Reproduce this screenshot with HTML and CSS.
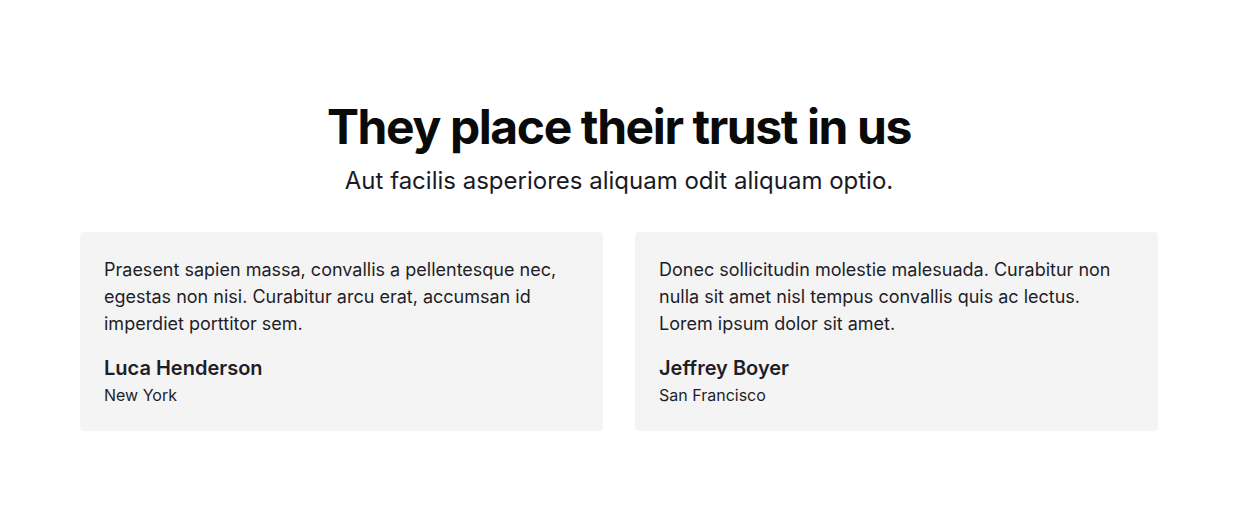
FILE: index.html
```html
<!DOCTYPE html>
<html lang="en">
<head>
<meta charset="utf-8">
<title>Testimonials</title>
<link rel="stylesheet" href="styles.css">
</head>
<body>
<section class="testimonials">
  <header class="intro">
    <h1 class="title">They place their trust in us</h1>
    <p class="subtitle">Aut facilis asperiores aliquam odit aliquam optio.</p>
  </header>
  <div class="cards">
    <article class="card">
      <p class="quote">Praesent sapien massa, convallis a pellentesque nec, egestas non nisi. Curabitur arcu erat, accumsan id imperdiet porttitor sem.</p>
      <div class="author">Luca Henderson</div>
      <div class="place">New York</div>
    </article>
    <article class="card">
      <p class="quote">Donec sollicitudin molestie malesuada. Curabitur non nulla sit amet nisl tempus convallis quis ac lectus. Lorem ipsum dolor sit amet.</p>
      <div class="author">Jeffrey Boyer</div>
      <div class="place">San Francisco</div>
    </article>
  </div>
</section>
</body>
</html>
```
FILE: styles.css
```css
* { box-sizing: border-box; }
body {
  margin: 0;
  background: #ffffff;
  font-family: Inter, "Noto Sans", sans-serif;
  color: #18181b;
}
.testimonials {
  padding: 96px 80px 0;
}
.intro {
  text-align: center;
}
.title {
  margin: 0;
  font-size: 48px;
  line-height: 62px;
  font-weight: 700;
  letter-spacing: -1.4px;
  color: #0a0a0a;
}
.subtitle {
  margin: 7px 0 0;
  font-size: 24px;
  line-height: 32px;
  color: #1a1a24;
}
.cards {
  display: grid;
  grid-template-columns: 1fr 1fr;
  gap: 32px;
  margin-top: 35px;
}
.card {
  background: #f4f4f4;
  border-radius: 4px;
  padding: 24px;
}
.quote {
  margin: 0;
  font-size: 18px;
  line-height: 27px;
  color: #1e1e28;
}
.author {
  margin-top: 17px;
  font-size: 20px;
  line-height: 28px;
  font-weight: 600;
  color: #1e1e28;
}
.place {
  margin-top: 1px;
  font-size: 16px;
  line-height: 24px;
  color: #1e1e28;
}
```
